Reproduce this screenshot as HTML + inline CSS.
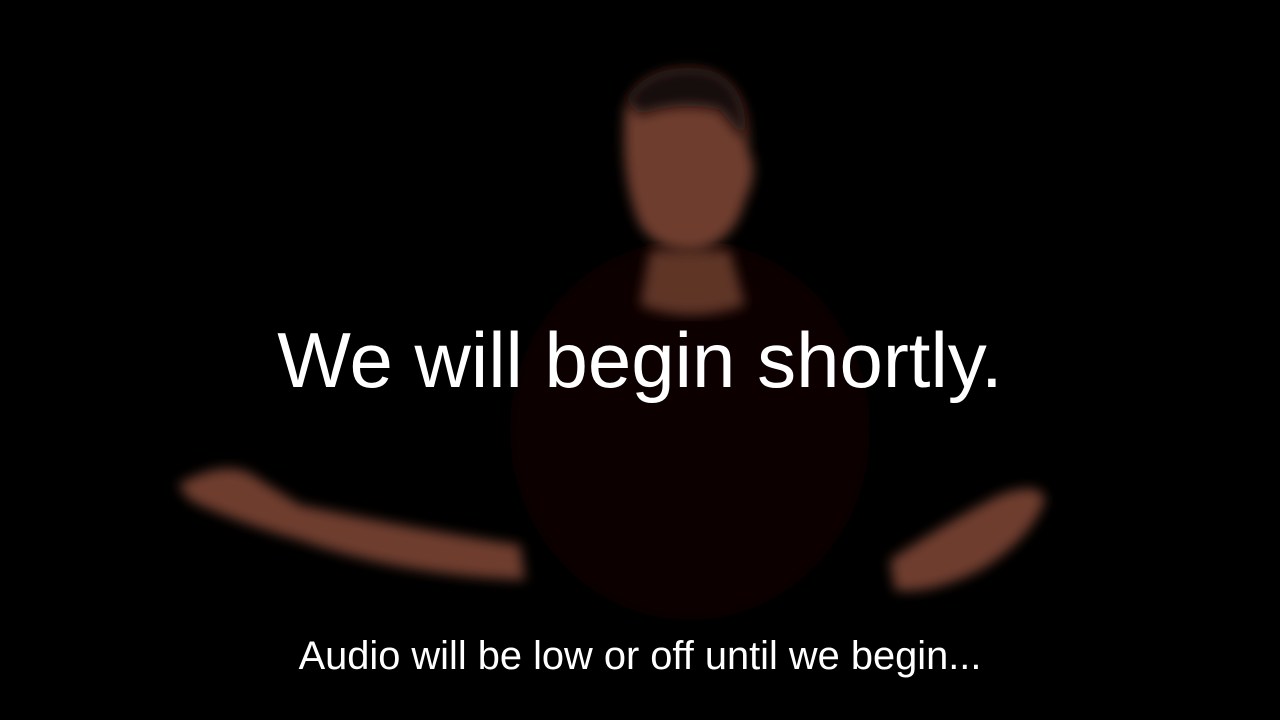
<!DOCTYPE html>
<html><head><style>
html,body{margin:0;padding:0;background:#000;width:1280px;height:720px;overflow:hidden}
svg{position:absolute;left:0;top:0}
.t{position:absolute;left:0;width:1280px;text-align:center;color:#fff;font-family:"Liberation Sans",sans-serif}
</style></head><body>
<svg width="1280" height="720">
<defs>
<filter id="b"><feGaussianBlur stdDeviation="6"/></filter>
<filter id="b2"><feGaussianBlur stdDeviation="20"/></filter>
</defs>
<ellipse cx="690" cy="430" rx="180" ry="190" fill="#070504" filter="url(#b2)"/>
<path d="M650 250 L730 250 L745 305 Q690 325 640 305 Z" fill="#5e3426" filter="url(#b)"/>
<path d="M625 110 Q640 65 700 70 Q750 80 748 150 Q760 170 745 200 Q735 240 700 250 Q660 255 640 225 Q620 180 625 110 Z" fill="#6e3e2e" filter="url(#b)"/>
<path d="M625 100 Q650 60 710 70 Q750 85 745 140 L720 110 Q680 100 640 115 Z" fill="#120a07" filter="url(#b)"/>
<path d="M178 485 Q230 455 260 480 L300 505 Q420 530 520 545 L525 580 Q400 575 300 540 Q230 520 190 500 Z" fill="#6e3e2e" filter="url(#b)"/>
<path d="M890 560 Q950 520 1000 495 Q1040 480 1045 500 Q1030 540 980 570 Q930 595 895 590 Z" fill="#6e3e2e" filter="url(#b)"/>
</svg>
<div class="t" style="top:315px;font-size:78px;line-height:90px">We will begin shortly.</div>
<div class="t" style="top:633px;font-size:39.8px;line-height:46px">Audio will be low or off until we begin...</div>
</body></html>
